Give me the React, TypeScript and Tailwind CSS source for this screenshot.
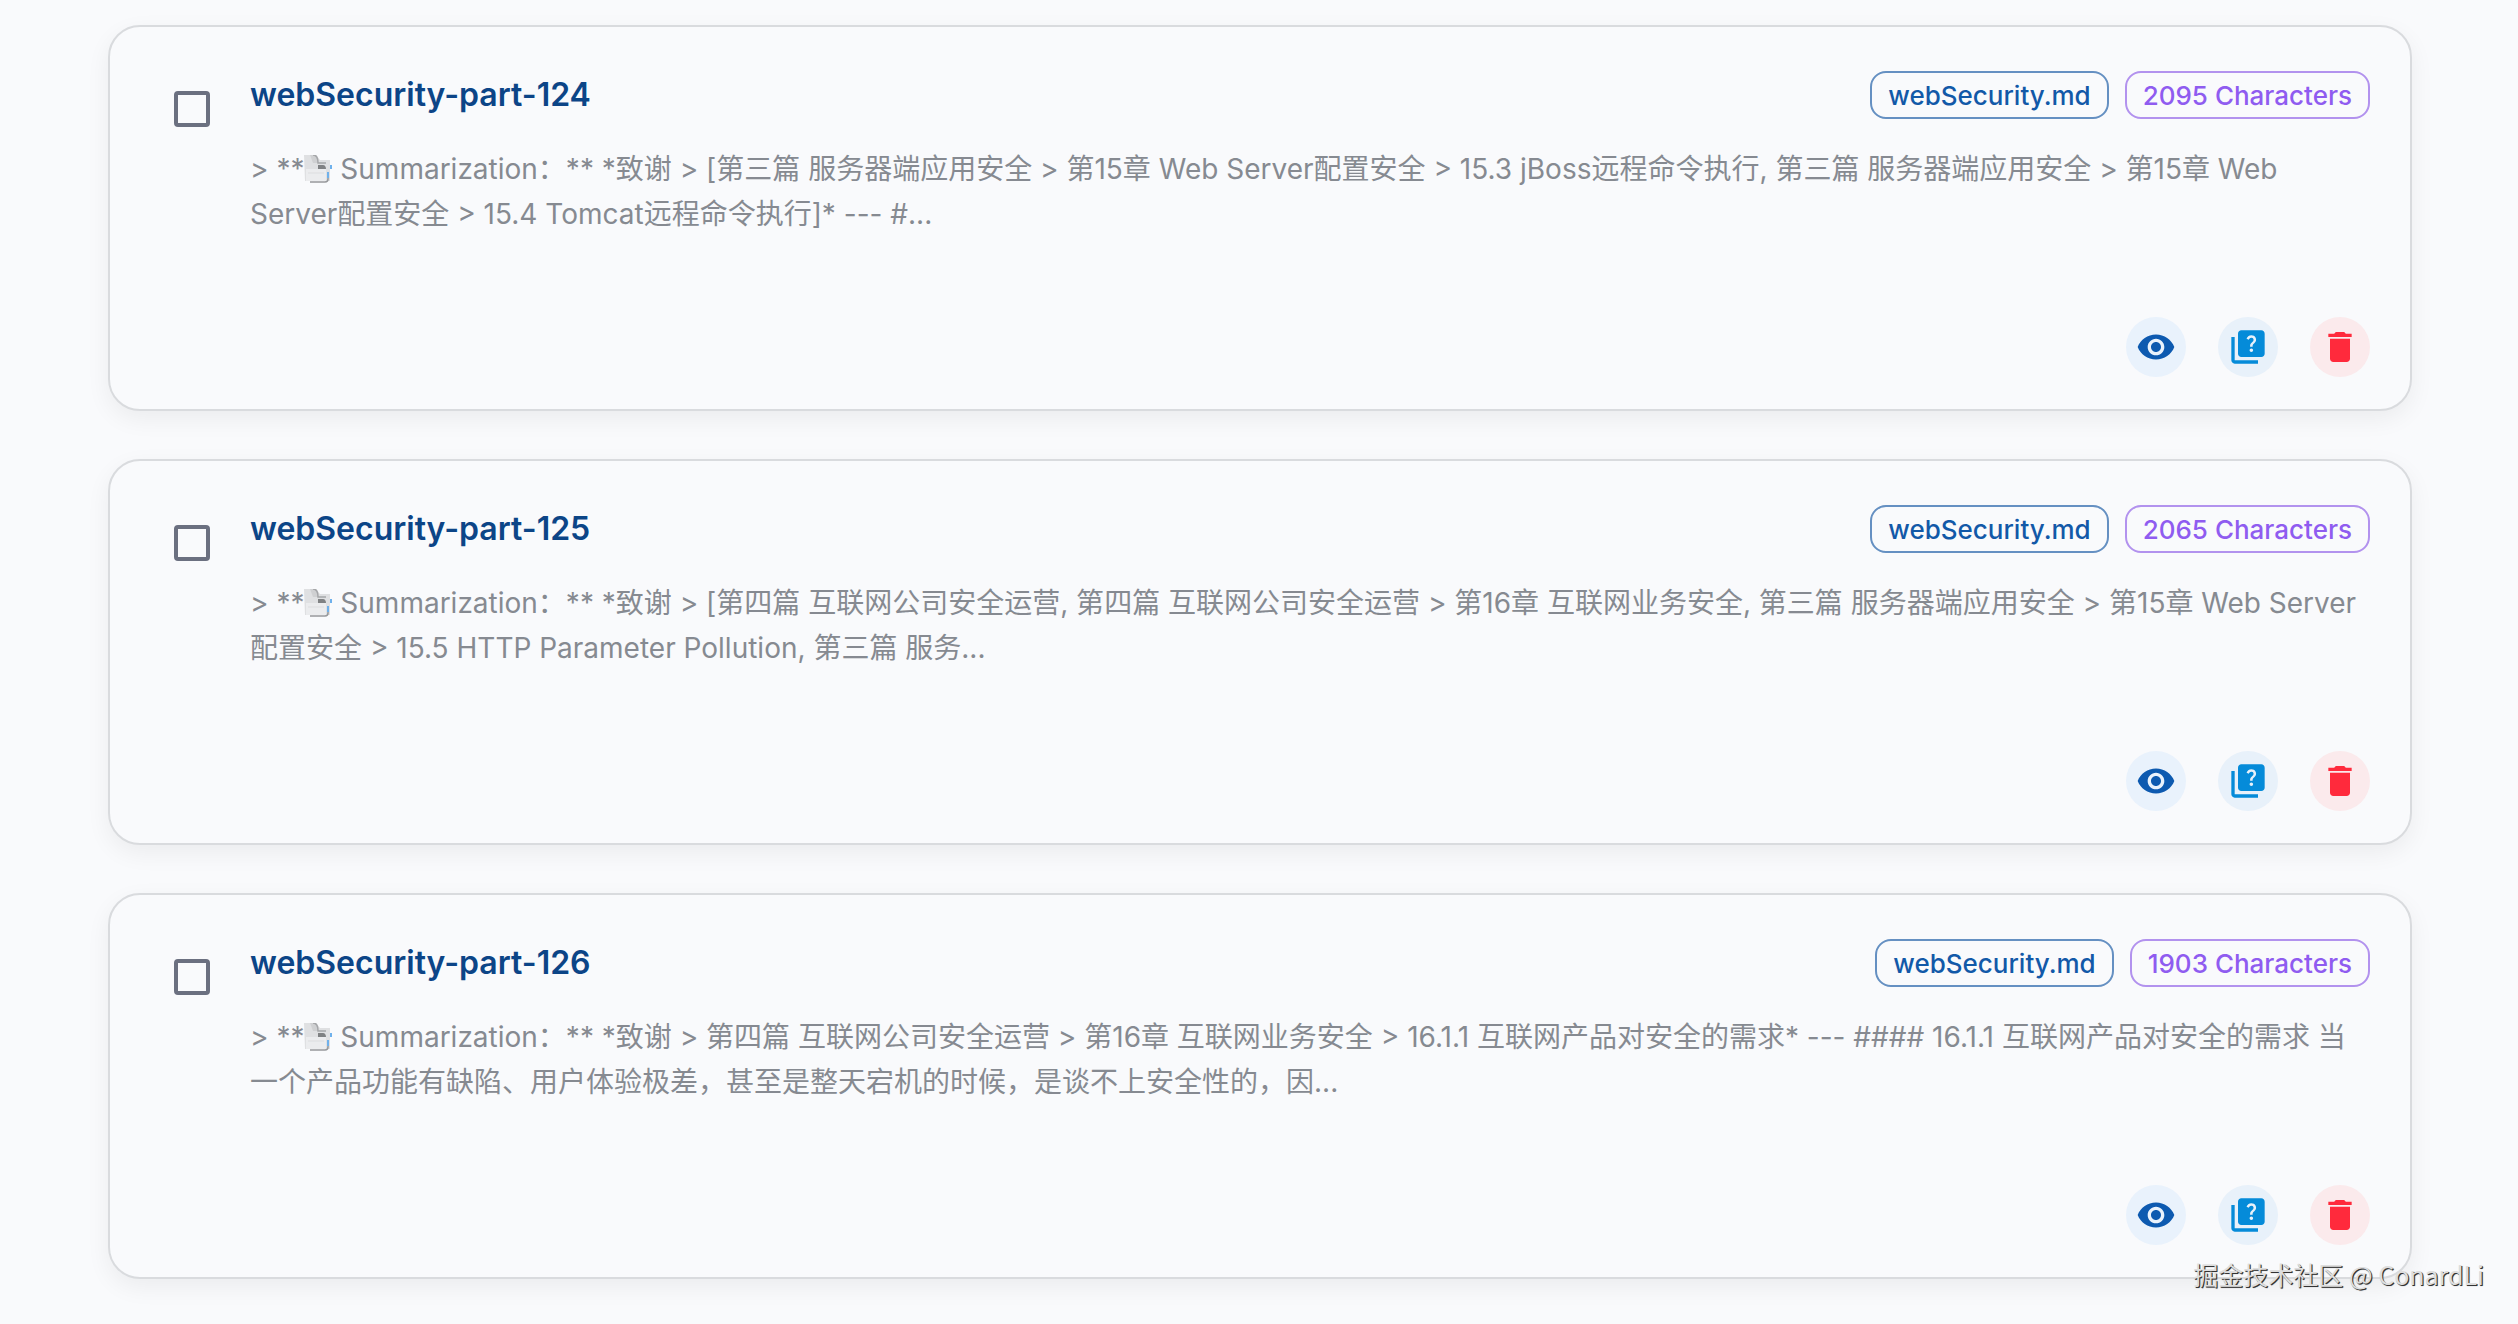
import React from "react"
import { MdDelete, MdQuiz, MdVisibility } from "react-icons/md"

type Chunk = {
  id: string
  name: string
  fileName: string
  size: number
  content: string
}

const chunks: Chunk[] = [
  {
    id: "124",
    name: "webSecurity-part-124",
    fileName: "webSecurity.md",
    size: 2095,
    content:
      "*致谢 > [第三篇 服务器端应用安全 > 第15章 Web Server配置安全 > 15.3 jBoss远程命令执行, 第三篇 服务器端应用安全 > 第15章 Web Server配置安全 > 15.4 Tomcat远程命令执行]* --- #...",
  },
  {
    id: "125",
    name: "webSecurity-part-125",
    fileName: "webSecurity.md",
    size: 2065,
    content:
      "*致谢 > [第四篇 互联网公司安全运营, 第四篇 互联网公司安全运营 > 第16章 互联网业务安全, 第三篇 服务器端应用安全 > 第15章 Web Server配置安全 > 15.5 HTTP Parameter Pollution, 第三篇 服务...",
  },
  {
    id: "126",
    name: "webSecurity-part-126",
    fileName: "webSecurity.md",
    size: 1903,
    content:
      "*致谢 > 第四篇 互联网公司安全运营 > 第16章 互联网业务安全 > 16.1.1 互联网产品对安全的需求* --- #### 16.1.1 互联网产品对安全的需求 当一个产品功能有缺陷、用户体验极差，甚至是整天宕机的时候，是谈不上安全性的，因...",
  },
]

const TabsIcon = () => (
  <svg viewBox="0 0 28 28" aria-hidden="true" className="inline-block size-7 align-[-4px]">
    <path d="M0 0h12l4 5h10v21H1z" fill="#dfe0e2" />
    <path d="M6 0h5c2 0 3 2 3 5v3H9z" fill="#cfd0d2" />
    <path d="M9 0c4 0 5 3 5 8h8" fill="none" stroke="#a5a6a9" strokeWidth="1.5" />
    <path d="M14 10h5c2 0 3 2 3 4h-8z" fill="#7f8183" />
    <path d="M2 14h20v12H2z" fill="#ebecee" />
    <path d="M4 18h16" fill="none" stroke="#dcdddf" strokeWidth="1" />
    <path d="M6 27h15c2 0 3-1 3-3v-3" fill="none" stroke="#96989b" strokeWidth="1.5" />
    <path d="M27 10v4M24 17v6" fill="none" stroke="#6fb1ec" strokeWidth="2" />
  </svg>
)

const ChunkCard = ({ chunk }: { chunk: Chunk }) => {
  return (
    <article className="flex min-h-[386px] flex-col justify-between rounded-[32px] border-2 border-[#d9dbde] bg-[#f9fafc] pt-11 pr-10 pb-8 pl-16 shadow-[0_8px_24px_rgba(0,0,0,0.06)]">
      <div className="flex items-start gap-10">
        <input
          type="checkbox"
          id={`chunk-${chunk.id}`}
          className="mt-5 size-9 shrink-0 appearance-none rounded-sm border-4 border-[#6b7080] checked:bg-[#6b7080]"
        />
        <div className="min-w-0 flex-1">
          <div className="flex items-center justify-between">
            <label htmlFor={`chunk-${chunk.id}`} className="text-[32px] leading-12 font-semibold text-[#0c4587]">
              {chunk.name}
            </label>
            <div className="flex gap-4 text-[26px] font-medium">
              <span className="flex h-12 items-center rounded-2xl border-2 border-[#6590c2] px-4 text-[#1259a8]">
                {chunk.fileName}
              </span>
              <span className="flex h-12 items-center rounded-2xl border-2 border-[#b292ee] px-4 text-[#8f5cf0]">
                {chunk.size} Characters
              </span>
            </div>
          </div>
          <p className="mt-7 text-[28px] leading-[45px] text-[#868a91]">
            {"> **"}
            <TabsIcon />
            {` Summarization：** ${chunk.content}`}
          </p>
        </div>
      </div>
      <div className="flex justify-end gap-8">
        <button
          type="button"
          aria-label="View details"
          className="flex size-15 items-center justify-center rounded-full bg-[#e9f2fc] text-[#0d5ab0]"
        >
          <MdVisibility className="size-10" />
        </button>
        <button
          type="button"
          aria-label="Generate questions"
          className="flex size-15 items-center justify-center rounded-full bg-[#e8f1fa] text-[#058bd9]"
        >
          <MdQuiz className="size-10" />
        </button>
        <button
          type="button"
          aria-label="Delete"
          className="flex size-15 items-center justify-center rounded-full bg-[#fbeaec] text-[#ff2a3c]"
        >
          <MdDelete className="size-10" />
        </button>
      </div>
    </article>
  )
}

const App = () => {
  return (
    <main className="relative min-h-screen bg-[#f9fafc] pt-[25px] pr-[106px] pb-[45px] pl-[108px] font-[Inter,'Noto_Sans_CJK_SC',sans-serif]">
      <div className="flex flex-col gap-12">
        {chunks.map((chunk) => (
          <ChunkCard key={chunk.id} chunk={chunk} />
        ))}
      </div>
      <span className="absolute right-[34px] bottom-[34px] font-['Noto_Sans_CJK_SC',sans-serif] text-[25px] leading-8 text-[#dedede] [text-shadow:1px_1px_0_#333,1px_1px_1px_#777]">
        掘金技术社区 @ ConardLi
      </span>
    </main>
  )
}

export default App
